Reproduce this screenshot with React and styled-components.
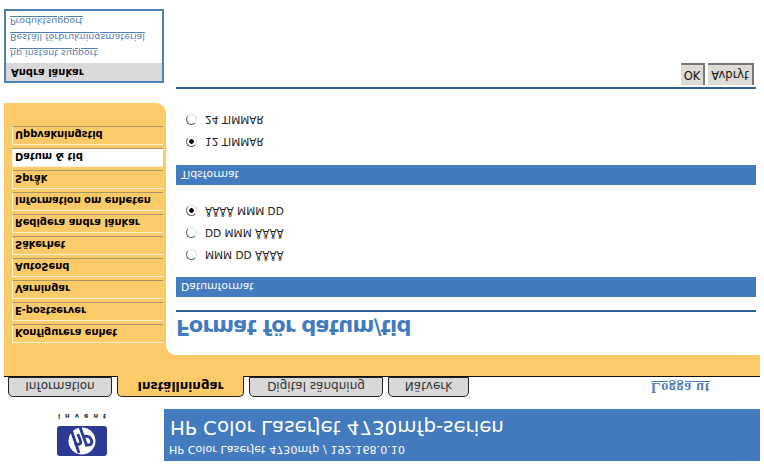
import React from "react";
import styled, { createGlobalStyle } from "styled-components";

const Global = createGlobalStyle`
  html, body { margin: 0; padding: 0; background: #fff; }
  * { box-sizing: border-box; }
`;

const BLUE = "#437bbe";
const YELLOW = "#fbca69";
const RULE = "#2f5f8f";
const LINK = "#4f7fb2";

const Page = styled.div`
  width: 764px;
  height: 465px;
  padding: 4px 4px 0 4px;
  overflow: hidden;
  transform: scaleY(-1);
  font-family: "DejaVu Sans", Verdana, sans-serif;
  color: #000;
  background: #fff;
`;

const Masthead = styled.header`
  display: flex;
  height: 52px;
  margin-bottom: 12px;
`;

const LogoColumn = styled.div`
  width: 160px;
  padding: 5px 4px 0 0;
  display: flex;
  flex-direction: column;
  align-items: center;
  gap: 7px;
`;

const LogoMark = styled.svg`
  display: block;
  width: 50px;
  height: 30px;
`;

const Invent = styled.div`
  font-size: 6.5px;
  line-height: 6px;
  font-weight: bold;
  letter-spacing: 5px;
  margin-right: -5px;
  color: #222;
`;

const Band = styled.div`
  flex: 1;
  background: ${BLUE};
  color: #fff;
  padding: 6px 0 0 5px;
`;

const BandSub = styled.div`
  font-size: 11px;
  line-height: 12px;
  letter-spacing: 0.1px;
  margin-bottom: 4px;
`;

const BandTitle = styled.div`
  font-size: 19.8px;
  line-height: 24px;
  padding-left: 1px;
`;

const TabRow = styled.nav`
  display: flex;
  height: 21px;
  padding-left: 4px;
  gap: 5px;
  border-bottom: 1px solid #111;
`;

const Tab = styled.a`
  height: ${(p) => (p.$active ? 21 : 20)}px;
  width: ${(p) => p.$w}px;
  border: 1px solid #222;
  border-bottom: ${(p) => (p.$active ? "none" : "1px solid #222")};
  border-radius: 5px 5px 0 0;
  background: ${(p) => (p.$active ? YELLOW : "#d8d8d8")};
  font-size: 12px;
  font-weight: ${(p) => (p.$active ? "bold" : "normal")};
  color: ${(p) => (p.$active ? "#000" : "#333")};
  line-height: 20px;
  text-align: center;
`;

const Logout = styled.a`
  margin-left: auto;
  margin-right: 50px;
  align-self: center;
  font-family: "Liberation Serif", "Times New Roman", serif;
  font-size: 14px;
  font-weight: bold;
  letter-spacing: 0.7px;
  line-height: 16px;
  color: ${LINK};
  text-decoration: underline;
`;

const Strip = styled.div`
  height: 21px;
  background: ${YELLOW};
`;

const Columns = styled.div`
  display: flex;
  height: 355px;
`;

const SideColumn = styled.aside`
  width: 162px;
  flex: none;
`;

const SideNav = styled.ul`
  list-style: none;
  margin: 0;
  padding: 12px 3px 20px 8px;
  height: 252px;
  background: ${YELLOW};
  border-bottom-right-radius: 10px;
`;

const SideItem = styled.li`
  height: 19px;
  margin-bottom: 3px;
  padding-left: 2px;
  border-top: 1px solid #fff3d6;
  border-left: 1px solid #fff3d6;
  border-bottom: 1px solid #a89468;
  background: ${(p) => (p.$active ? "#fff" : "transparent")};
  font-size: 10px;
  letter-spacing: -0.06px;
  font-weight: bold;
  line-height: 19px;
  white-space: nowrap;
`;

const LinkBox = styled.div`
  margin-top: 20px;
  width: 160px;
  height: 74px;
  border: 2px solid #4f80b4;
`;

const LinkHead = styled.div`
  height: 18px;
  background: #d9d9d9;
  padding-left: 5px;
  font-size: 10px;
  font-weight: bold;
  line-height: 18px;
`;

const LinkItem = styled.a`
  display: block;
  height: 16px;
  padding-left: 4px;
  font-size: 9.5px;
  line-height: 16px;
  color: ${LINK};
  text-decoration: underline;
  white-space: nowrap;
  &:first-of-type { margin-top: 2px; }
`;

const ContentColumn = styled.div`
  flex: 1;
  background: linear-gradient(${YELLOW}, ${YELLOW}) no-repeat 0 0 / 12px 12px;
`;

const ContentPanel = styled.main`
  height: 100%;
  background: #fff;
  border-top-left-radius: 10px;
  padding: 15px 4px 0 10px;
`;

const Title = styled.h1`
  margin: 0;
  height: 28px;
  font-size: 21px;
  letter-spacing: -0.7px;
  line-height: 26px;
  font-weight: bold;
  color: ${BLUE};
  white-space: nowrap;
`;

const Rule = styled.hr`
  margin: ${(p) => p.$top || 0}px 0 0;
  border: none;
  height: 2px;
  background: ${RULE};
`;

const SectionBar = styled.div`
  height: 20px;
  margin-top: ${(p) => p.$top}px;
  background: ${BLUE};
  color: #fff;
  padding-left: 5px;
  font-size: 10.8px;
  line-height: 22px;
`;

const Options = styled.div`
  padding-top: ${(p) => p.$top}px;
`;

const Option = styled.label`
  display: flex;
  align-items: center;
  height: 22px;
  padding-left: 10px;
  font-size: 10.5px;
  color: #222;
`;

const Radio = styled.input.attrs({ type: "radio" })`
  appearance: none;
  width: 11px;
  height: 11px;
  margin: 0 8px 0 0;
  border-radius: 50%;
  border: 1px solid;
  border-color: #666 #ddd #ddd #666;
  background: #fff;
  flex: none;
  &:checked {
    background: radial-gradient(circle, #000 0 2px, #fff 2.6px);
  }
`;

const Actions = styled.div`
  display: flex;
  justify-content: flex-end;
  gap: 3px;
  margin-top: 2px;
  padding-right: 2px;
`;

const Button = styled.button`
  width: ${(p) => p.$w}px;
  height: 22px;
  padding: 0;
  background: #dedbd5;
  border: 1px solid;
  border-width: 0 2px 2px 0;
  border-color: #777;
  font-family: "DejaVu Sans", Verdana, sans-serif;
  font-size: 11.5px;
  color: #111;
`;

function HpLogo() {
  return (
    <LogoMark viewBox="0 0 50 30">
      <rect width="50" height="30" rx="3" fill="#2c3a96" />
      <circle cx="25" cy="15" r="13.5" fill="#fff" />
      <g fill="none" stroke="#2c3a96" strokeWidth="2.8">
        <path d="M22 3 L14.5 25" />
        <path d="M18 13 Q20.5 11 22.6 11.8 Q24.4 13 23.4 15.5 L20.8 22" />
        <path d="M30 9.5 L23 29" />
        <path d="M28.4 11.8 Q31.5 10.5 33.6 11.6 Q35.4 13 34.4 16 Q33 19.5 29.5 19.8 L26.6 19.6" />
      </g>
    </LogoMark>
  );
}

const nav = [
  "Konfigurera enhet",
  "E-postserver",
  "Varningar",
  "AutoSend",
  "Säkerhet",
  "Redigera andra länkar",
  "Information om enheten",
  "Språk",
  "Datum & tid",
  "Uppvakningstid",
];

export default function App() {
  return (
    <>
      <Global />
      <Page>
        <Masthead>
          <LogoColumn>
            <HpLogo />
            <Invent>invent</Invent>
          </LogoColumn>
          <Band>
            <BandSub>HP Color LaserJet 4730mfp / 192.168.0.10</BandSub>
            <BandTitle>HP Color LaserJet 4730mfp-serien</BandTitle>
          </Band>
        </Masthead>
        <TabRow>
          <Tab $w={104}>Information</Tab>
          <Tab $w={127} $active>Inställningar</Tab>
          <Tab $w={134}>Digital sändning</Tab>
          <Tab $w={81}>Nätverk</Tab>
          <Logout>Logga ut</Logout>
        </TabRow>
        <Strip />
        <Columns>
          <SideColumn>
            <SideNav>
              {nav.map((n) => (
                <SideItem key={n} $active={n === "Datum & tid"}>{n}</SideItem>
              ))}
            </SideNav>
            <LinkBox>
              <LinkHead>Andra länkar</LinkHead>
              <LinkItem>hp instant support</LinkItem>
              <LinkItem>Beställ förbrukningsmaterial</LinkItem>
              <LinkItem>Produktsupport</LinkItem>
            </LinkBox>
          </SideColumn>
          <ContentColumn>
            <ContentPanel>
              <Title>Format för datum/tid</Title>
              <Rule />
              <SectionBar $top={13}>Datumformat</SectionBar>
              <Options $top={11}>
                <Option><Radio name="d" />MMM DD ÅÅÅÅ</Option>
                <Option><Radio name="d" />DD MMM ÅÅÅÅ</Option>
                <Option><Radio name="d" defaultChecked />ÅÅÅÅ MMM DD</Option>
              </Options>
              <SectionBar $top={15}>Tidsformat</SectionBar>
              <Options $top={12}>
                <Option><Radio name="t" defaultChecked />12 TIMMAR</Option>
                <Option><Radio name="t" />24 TIMMAR</Option>
              </Options>
              <Rule $top={20} />
              <Actions>
                <Button $w={24}>OK</Button>
                <Button $w={46}>Avbryt</Button>
              </Actions>
            </ContentPanel>
          </ContentColumn>
        </Columns>
      </Page>
    </>
  );
}
